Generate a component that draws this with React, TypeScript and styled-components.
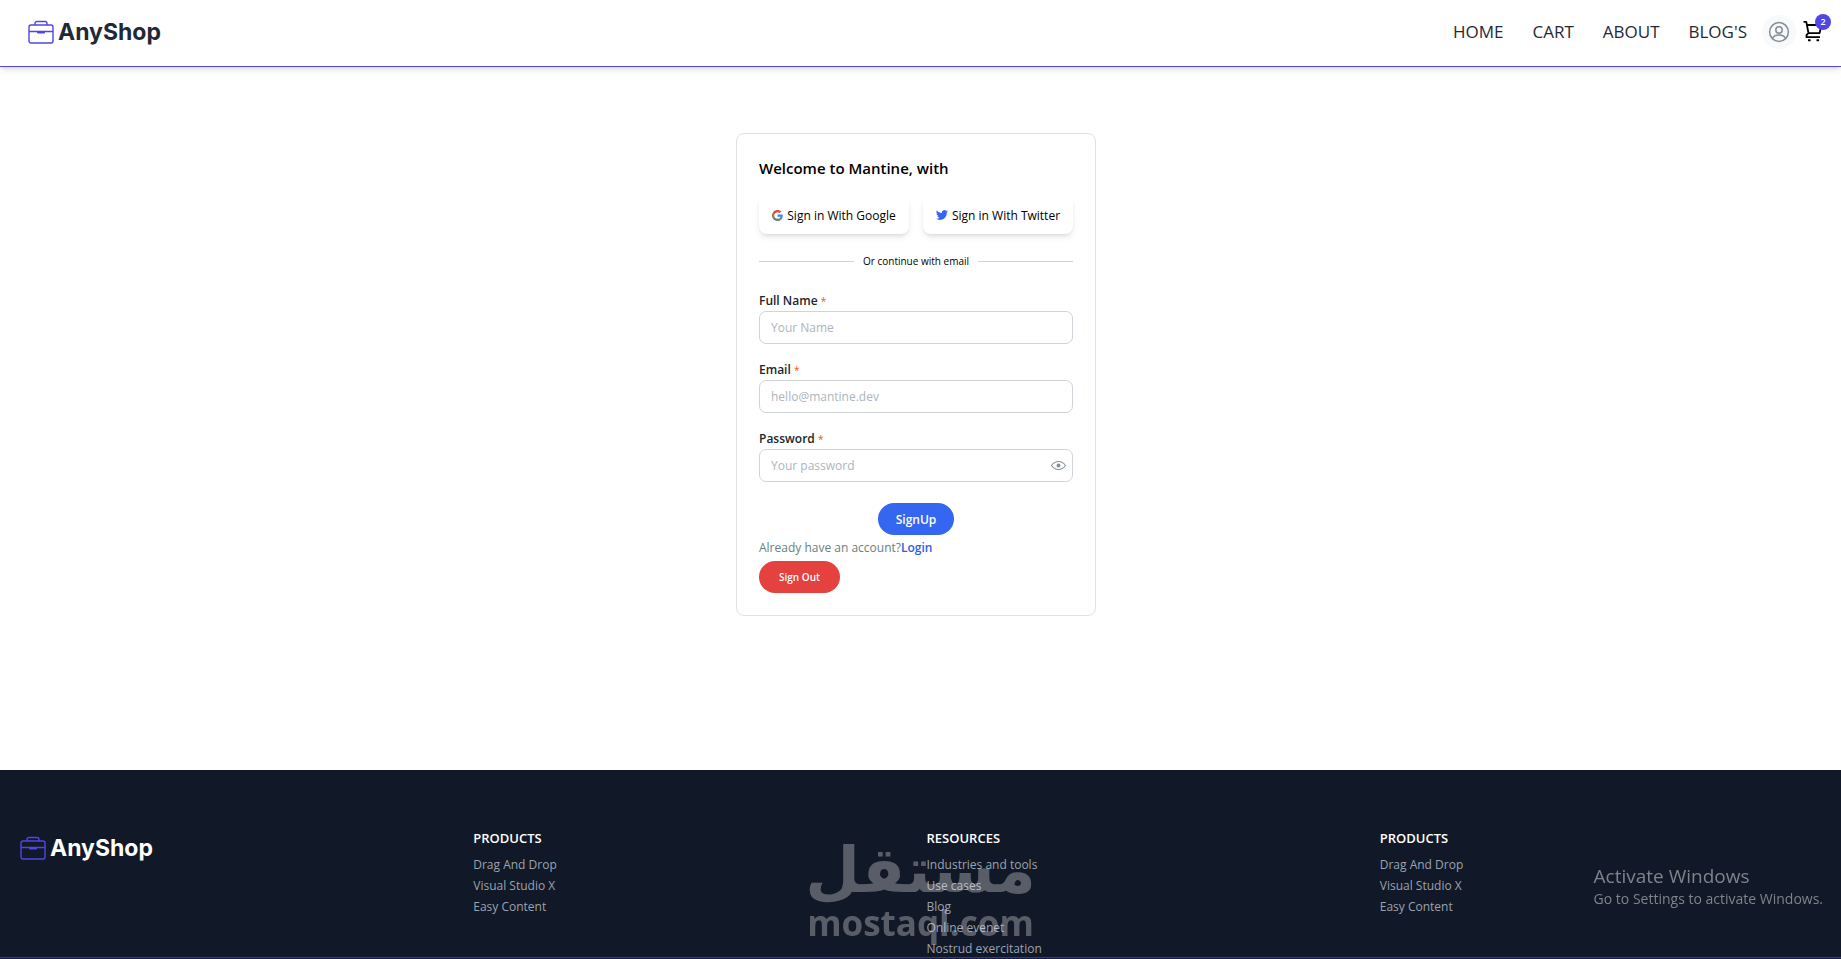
import React from "react";
import styled, { createGlobalStyle } from "styled-components";

const GlobalStyle = createGlobalStyle`
  * { box-sizing: border-box; }
  body { margin: 0; background: #fff; color: #000; font-family: "Open Sans", "Noto Sans", sans-serif; }
  button, input { font-family: inherit; }
  a { text-decoration: none; color: inherit; }
  h2, h3, p, ul { margin: 0; padding: 0; }
  ul { list-style: none; }
`;

const Page = styled.div`
  min-height: 100vh;
  display: flex;
  flex-direction: column;
`;

const Header = styled.header`
  height: 67px;
  padding: 0 16px 2px 28px;
  display: flex;
  align-items: center;
  justify-content: space-between;
  border-bottom: 1px solid #4f46e5;
  box-shadow: 0 4px 6px -1px rgba(0, 0, 0, 0.1), 0 2px 4px -2px rgba(0, 0, 0, 0.1);
`;

const Logo = styled.a<{ $light?: boolean }>`
  display: flex;
  align-items: center;
  gap: 4px;
  font-family: Inter, sans-serif;
  font-size: 23px;
  line-height: 32px;
  font-weight: 700;
  color: ${(p) => (p.$light ? "#fff" : "#1f2937")};
`;

const Actions = styled.div`
  display: flex;
  align-items: center;
`;

const Nav = styled.nav`
  display: flex;
  gap: 29px;
  margin-right: 15px;
  font-size: 17px;
  line-height: 28px;
  color: #1f2937;
`;

const Avatar = styled.button`
  width: 34px;
  height: 34px;
  padding: 0;
  border: 0;
  border-radius: 50%;
  background: #f8f9fa;
  color: #868e96;
  display: grid;
  place-items: center;
`;

const CartButton = styled.button`
  position: relative;
  width: 24px;
  height: 24px;
  margin-left: 5px;
  padding: 0;
  border: 0;
  background: none;
  color: #000;
`;

const Badge = styled.span`
  position: absolute;
  top: -6px;
  right: -6px;
  width: 16px;
  height: 16px;
  border-radius: 50%;
  background: #4f46e5;
  color: #fff;
  font-size: 9px;
  line-height: 16px;
  font-weight: 600;
  text-align: center;
`;

const Main = styled.main`
  flex: 1;
  display: flex;
  justify-content: center;
  align-items: flex-start;
  padding: 66px 9px 40px 0;
`;

const Card = styled.section`
  width: 360px;
  padding: 22px;
  border: 1px solid #dee2e6;
  border-radius: 8px;
`;

const Title = styled.h2`
  font-size: 15px;
  line-height: 24px;
  font-weight: 600;
  margin-bottom: 16px;
`;

const Socials = styled.div`
  display: flex;
  gap: 14px;
`;

const SocialButton = styled.button`
  flex: 1;
  height: 38px;
  padding: 0;
  border: 0;
  border-radius: 8px;
  background: #fff;
  color: #000;
  font-size: 12px;
  white-space: nowrap;
  display: flex;
  align-items: center;
  justify-content: center;
  gap: 4px;
  box-shadow: 0 4px 6px -1px rgba(0, 0, 0, 0.1), 0 2px 4px -2px rgba(0, 0, 0, 0.1);
`;

const Divider = styled.div`
  display: flex;
  align-items: center;
  gap: 9px;
  margin: 18px 0 21px;
  font-size: 10px;
  line-height: 18px;
  &::before,
  &::after {
    content: "";
    flex: 1;
    height: 1px;
    background: #ced4da;
  }
`;

const Form = styled.form`
  display: flex;
  flex-direction: column;
`;

const Fields = styled.div`
  display: flex;
  flex-direction: column;
  gap: 16px;
  margin-bottom: 21px;
`;

const Field = styled.div`
  display: flex;
  flex-direction: column;
`;

const Label = styled.label`
  font-size: 12px;
  line-height: 20px;
  font-weight: 600;
  color: #212529;
`;

const Required = styled.span`
  color: #e8590c;
  font-size: 10px;
  font-weight: 400;
`;

const InputBox = styled.div`
  display: flex;
  align-items: center;
  height: 33px;
  padding: 0 6px 0 11px;
  border: 1px solid #ced4da;
  border-radius: 7px;
`;

const Input = styled.input`
  flex: 1;
  min-width: 0;
  padding: 0;
  border: 0;
  outline: 0;
  background: none;
  font-size: 12px;
  line-height: 20px;
  &::placeholder { color: #adb5bd; opacity: 1; }
`;

const EyeButton = styled.button`
  display: flex;
  padding: 0;
  border: 0;
  background: none;
  color: #868e96;
`;

const PillButton = styled.button<{ $tone: "blue" | "red" }>`
  align-self: ${(p) => (p.$tone === "blue" ? "center" : "flex-start")};
  width: ${(p) => (p.$tone === "blue" ? 76 : 81)}px;
  height: 32px;
  padding: 0;
  border: 0;
  border-radius: 16px;
  color: #fff;
  background: ${(p) => (p.$tone === "blue" ? "#3566f0" : "#e5413f")};
  font-size: ${(p) => (p.$tone === "blue" ? 12 : 10)}px;
  font-weight: 600;
`;

const Prompt = styled.p`
  margin: 4px 0;
  font-size: 12px;
  line-height: 18px;
  color: #6b7f7a;
  a { color: #2f5bea; font-weight: 600; }
`;

const Footer = styled.footer`
  background: #111827;
  box-shadow: inset 0 -1px #151a4a, inset 0 -2px #3a4058;
`;

const FooterGrid = styled.div`
  display: grid;
  grid-template-columns: repeat(4, 1fr);
  gap: 12px;
  align-items: start;
  padding: 57px 20px 0;
`;

const FooterLogo = styled.div`
  padding-top: 5px;
`;

const ColumnTitle = styled.h3`
  font-size: 13px;
  line-height: 22px;
  font-weight: 600;
  color: #fff;
  margin-bottom: 5px;
`;

const ColumnLinks = styled.ul`
  font-size: 12px;
  line-height: 21px;
  color: #9ca3af;
`;

const Watermark = styled.div`
  position: fixed;
  left: 50%;
  bottom: 16px;
  width: 222px;
  margin-left: -111px;
  display: flex;
  flex-direction: column;
  align-items: center;
  color: #fff;
  opacity: 0.3;
  pointer-events: none;
  white-space: nowrap;
`;

const WatermarkArabic = styled.span`
  font-family: "DejaVu Sans", sans-serif;
  font-weight: 700;
  font-size: 63px;
  line-height: 64px;
`;

const WatermarkLatin = styled.span`
  font-family: "Open Sans", sans-serif;
  font-weight: 700;
  font-size: 35px;
  line-height: 40px;
`;

const Activation = styled.div`
  position: fixed;
  right: 18px;
  bottom: 50px;
  color: #7f838b;
  font-size: 14px;
  line-height: 20px;
  pointer-events: none;
  strong { display: block; font-size: 19px; line-height: 26px; font-weight: 400; }
`;

const BriefcaseIcon = () => (
  <svg width="26" height="24" viewBox="0 0 26 24" fill="none" stroke="#4f46e5" strokeWidth="1.4">
    <rect x="1" y="5" width="24" height="18" rx="2" />
    <path d="M7 5V3.500a2 2 0 0 1 2-2h8a2 2 0 0 1 2 2V5M1 11.500h24" />
    <path d="M9.500 11.500h7v1.500h-7z" fill="#4f46e5" strokeWidth="1" />
  </svg>
);

const UserIcon = () => (
  <svg width="22" height="22" viewBox="0 0 22 22" fill="none" stroke="currentColor" strokeWidth="1.500">
    <circle cx="11" cy="11" r="9.400" />
    <circle cx="11" cy="9" r="3.200" />
    <path d="M4.500 17.500c1-2.400 3-3.500 6.500-3.500s5.500 1.100 6.500 3.500" />
  </svg>
);

const CartIcon = () => (
  <svg width="22" height="22" viewBox="0 0 22 22" fill="none" stroke="currentColor" strokeWidth="1.800">
    <path d="M1.500 1.800h2.800l2.200 11.400h11l2-8.200H5M6.500 13.200l-2 2v2H18" strokeLinejoin="round" />
    <path d="M6 20.300h2.600M14.500 20.300h2.600" strokeWidth="2" />
  </svg>
);

const GoogleIcon = () => (
  <svg width="11" height="11" viewBox="0 0 48 48">
    <path fill="#ea4335" d="M24 9.500c3.500 0 6.700 1.200 9.200 3.600l6.900-6.900C35.900 2.400 30.500 0 24 0 14.600 0 6.500 5.400 2.600 13.200l8 6.200C12.400 13.700 17.700 9.500 24 9.500z" />
    <path fill="#4285f4" d="M47 24.600c0-1.600-.2-3.100-.4-4.600H24v9h12.900c-.6 3-2.200 5.500-4.700 7.200l7.700 6C44.400 38 47 31.800 47 24.600z" />
    <path fill="#8a7a5c" d="M10.500 28.600a14.500 14.500 0 0 1 0-9.200l-8-6.200a24 24 0 0 0 0 21.600z" />
    <path fill="#6f7f78" d="M24 48c6.500 0 11.900-2.100 15.900-5.800l-7.700-6c-2.200 1.400-4.900 2.300-8.200 2.300-6.300 0-11.600-4.200-13.500-9.900l-8 6.200C6.500 42.600 14.600 48 24 48z" />
  </svg>
);

const TwitterIcon = () => (
  <svg width="12" height="12" viewBox="0 0 24 24" fill="#3566f0">
    <path d="M23.950 4.570a10 10 0 0 1-2.820.77 4.960 4.960 0 0 0 2.160-2.720c-.95.550-2 .950-3.130 1.180a4.920 4.920 0 0 0-8.380 4.480C7.690 8.090 4.070 6.130 1.640 3.160a4.920 4.920 0 0 0 1.520 6.570 4.900 4.900 0 0 1-2.230-.61v.06a4.920 4.920 0 0 0 3.950 4.830 5 5 0 0 1-2.210.080 4.940 4.940 0 0 0 4.600 3.420A9.870 9.870 0 0 1 0 19.540a14 14 0 0 0 7.550 2.210c9.050 0 14-7.500 14-13.980 0-.210 0-.420-.020-.630a9.940 9.940 0 0 0 2.460-2.550z" />
  </svg>
);

const EyeIcon = () => (
  <svg width="15" height="15" viewBox="0 0 15 15" fill="currentColor" fillRule="evenodd">
    <path d="M7.500 11C4.800 11 2.630 9.620 1.090 7.500 2.630 5.380 4.800 4 7.500 4s4.870 1.380 6.410 3.500C12.370 9.620 10.200 11 7.500 11zm0-8C4.310 3 1.800 4.710.080 7.240a.5.5 0 0 0 0 .520C1.800 10.290 4.310 12 7.500 12s5.700-1.710 7.420-4.240a.5.5 0 0 0 0-.520C13.200 4.710 10.690 3 7.500 3zm0 6.500a2 2 0 1 0 0-4 2 2 0 0 0 0 4z" />
  </svg>
);

const columns = [
  { title: "PRODUCTS", links: ["Drag And Drop", "Visual Studio X", "Easy Content"] },
  { title: "RESOURCES", links: ["Industries and tools", "Use cases", "Blog", "Online evenet", "Nostrud exercitation"] },
  { title: "PRODUCTS", links: ["Drag And Drop", "Visual Studio X", "Easy Content"] },
];

const fields = [
  { id: "name", label: "Full Name", placeholder: "Your Name", type: "text" },
  { id: "email", label: "Email", placeholder: "hello@mantine.dev", type: "email" },
  { id: "password", label: "Password", placeholder: "Your password", type: "password" },
];

export default function App() {
  return (
    <Page>
      <GlobalStyle />
      <Header>
        <Logo href="#"><BriefcaseIcon />AnyShop</Logo>
        <Actions>
          <Nav>
            {["HOME", "CART", "ABOUT", "BLOG'S"].map((item) => <a key={item} href="#">{item}</a>)}
          </Nav>
          <Avatar type="button" aria-label="Account"><UserIcon /></Avatar>
          <CartButton type="button" aria-label="Cart"><CartIcon /><Badge>2</Badge></CartButton>
        </Actions>
      </Header>
      <Main>
        <Card>
          <Title>Welcome to Mantine, with</Title>
          <Socials>
            <SocialButton type="button"><GoogleIcon />Sign in With Google</SocialButton>
            <SocialButton type="button"><TwitterIcon />Sign in With Twitter</SocialButton>
          </Socials>
          <Divider>Or continue with email</Divider>
          <Form onSubmit={(e) => e.preventDefault()}>
            <Fields>
              {fields.map((f) => (
                <Field key={f.id}>
                  <Label htmlFor={f.id}>{f.label} <Required>*</Required></Label>
                  <InputBox>
                    <Input id={f.id} type={f.type} placeholder={f.placeholder} />
                    {f.type === "password" && <EyeButton type="button" aria-label="Show password"><EyeIcon /></EyeButton>}
                  </InputBox>
                </Field>
              ))}
            </Fields>
            <PillButton type="submit" $tone="blue">SignUp</PillButton>
            <Prompt>Already have an account?<a href="#">Login</a></Prompt>
            <PillButton type="button" $tone="red">Sign Out</PillButton>
          </Form>
        </Card>
      </Main>
      <Footer>
        <FooterGrid>
          <FooterLogo><Logo href="#" $light><BriefcaseIcon />AnyShop</Logo></FooterLogo>
          {columns.map((c, i) => (
            <div key={i}>
              <ColumnTitle>{c.title}</ColumnTitle>
              <ColumnLinks>{c.links.map((l) => <li key={l}><a href="#">{l}</a></li>)}</ColumnLinks>
            </div>
          ))}
        </FooterGrid>
      </Footer>
      <Watermark>
        <WatermarkArabic lang="ar">مستقل</WatermarkArabic>
        <WatermarkLatin>mostaql.com</WatermarkLatin>
      </Watermark>
      <Activation><strong>Activate Windows</strong>Go to Settings to activate Windows.</Activation>
    </Page>
  );
}
